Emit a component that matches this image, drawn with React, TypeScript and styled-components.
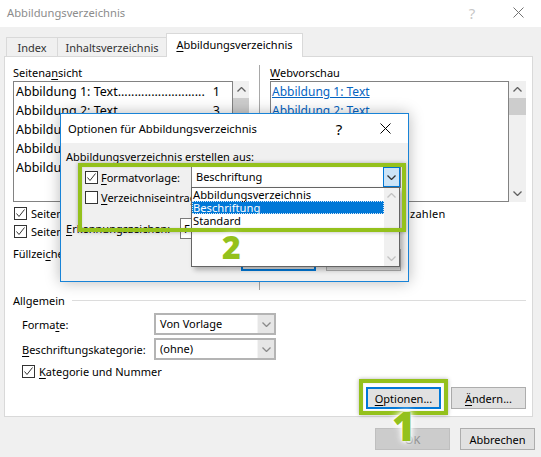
import React from 'react';
import styled, { createGlobalStyle } from 'styled-components';

const GREEN = '#94c11c';

const GlobalStyle = createGlobalStyle`
  html, body {
    margin: 0;
    padding: 0;
    background: #f0f0f0;
  }
  body {
    font-family: "Noto Sans", "Liberation Sans", sans-serif;
    font-size: 11px;
    color: #000;
  }
  * {
    box-sizing: border-box;
  }
`;

const Acc = styled.span`
  text-decoration: underline;
  text-underline-offset: 2px;
`;

const Chevron = ({ up, color = '#606060' }: { up?: boolean; color?: string }) => (
  <svg width="9" height="5" viewBox="0 0 9 5">
    <polyline
      points={up ? '0.5,4.5 4.5,0.5 8.5,4.5' : '0.5,0.5 4.5,4.5 8.5,0.5'}
      fill="none"
      stroke={color}
      strokeWidth="1.3"
    />
  </svg>
);

const CloseIcon = () => (
  <svg width="11" height="11" viewBox="0 0 11 11">
    <path d="M0.5 0.5 L10.5 10.5 M10.5 0.5 L0.5 10.5" stroke="#000" strokeWidth="1" />
  </svg>
);

const CheckMark = () => (
  <svg width="11" height="11" viewBox="0 0 11 11">
    <polyline points="1.5,5.5 4,8.5 9.5,1.5" fill="none" stroke="#333" strokeWidth="1" />
  </svg>
);

const Window = styled.div`
  position: relative;
  width: 541px;
  height: 457px;
  background: #f0f0f0;
  overflow: hidden;
`;

const TitleBar = styled.div<{ $h: number; $lift?: number }>`
  display: flex;
  align-items: center;
  height: ${(p) => p.$h}px;
  background: #fff;
  padding-left: 7px;
  padding-bottom: ${(p) => p.$lift ?? 0}px;
`;

const TitleText = styled.div<{ $active?: boolean }>`
  flex: 1;
  font-size: 11.2px;
  color: ${(p) => (p.$active ? '#000' : '#8c8c8c')};
  white-space: nowrap;
`;

const CaptionButton = styled.div<{ $dim?: boolean }>`
  width: 46px;
  height: 100%;
  display: flex;
  align-items: center;
  justify-content: center;
  font-size: 15px;
  color: ${(p) => (p.$dim ? '#9a9a9a' : '#000')};
  opacity: ${(p) => (p.$dim ? 0.55 : 1)};
`;

const TabStrip = styled.div`
  display: flex;
  align-items: flex-end;
  height: 30px;
  padding-left: 6px;
  margin-bottom: -1px;
  position: relative;
  z-index: 1;
`;

const Tab = styled.div<{ $w: number; $active?: boolean }>`
  width: ${(p) => p.$w}px;
  height: ${(p) => (p.$active ? 24 : 19)}px;
  margin-bottom: ${(p) => (p.$active ? 0 : 1)}px;
  margin-left: -1px;
  &:first-child {
    margin-left: 0;
  }
  border: 1px solid #d9d9d9;
  border-bottom: none;
  background: ${(p) => (p.$active ? '#fff' : '#f0f0f0')};
  display: flex;
  align-items: center;
  justify-content: center;
  padding-bottom: ${(p) => (p.$active ? 2 : 0)}px;
  color: ${(p) => (p.$active ? '#000' : '#333')};
  white-space: nowrap;
`;

const Panel = styled.div`
  margin: 0 8px 0 4px;
  background: #fff;
  border: 1px solid #d9d9d9;
  padding: 7px 6px 7px 8px;
`;

const TopArea = styled.div`
  display: grid;
  grid-template-columns: 236px 1px 1fr;
  column-gap: 10px;
  height: 226px;
`;

const Column = styled.div`
  display: flex;
  flex-direction: column;
`;

const VSeparator = styled.div`
  background: #a8a8a8;
  margin-top: 1px;
`;

const FieldLabel = styled.div`
  height: 17px;
  line-height: 17px;
  white-space: nowrap;
`;

const ListFrame = styled.div`
  display: flex;
  height: 121px;
`;

const ListBox = styled.div<{ $w: number; $pad: number }>`
  width: ${(p) => p.$w}px;
  border: 1px solid #828282;
  background: #fff;
  overflow: hidden;
  padding: 0 12px 0 ${(p) => p.$pad}px;
`;

const ListEntry = styled.div`
  display: flex;
  height: 19px;
  line-height: 19px;
  font-size: 12.5px;
  white-space: nowrap;
`;

const PageNumber = styled.span`
  margin-left: auto;
`;

const LinkEntry = styled.div`
  height: 18.5px;
  line-height: 19px;
  font-size: 12px;
  color: #0563c1;
  text-decoration: underline;
  white-space: nowrap;
`;

const ScrollBar = styled.div<{ $w: number }>`
  width: ${(p) => p.$w}px;
  background: #f0f0f0;
  display: flex;
  flex-direction: column;
`;

const ScrollArrow = styled.div<{ $bottom?: boolean }>`
  height: 17px;
  display: flex;
  align-items: center;
  justify-content: center;
  margin-top: ${(p) => (p.$bottom ? 'auto' : '0')};
`;

const Thumb = styled.div`
  height: 17px;
  background: #cdcdcd;
`;

const CheckRow = styled.div<{ $indent?: number; $top?: number }>`
  display: flex;
  align-items: center;
  gap: 4px;
  height: 18px;
  padding-left: ${(p) => p.$indent ?? 1}px;
  margin-top: ${(p) => p.$top ?? 0}px;
  white-space: nowrap;
`;

const CheckBox = styled.div`
  width: 13px;
  height: 13px;
  flex: none;
  border: 1px solid #333;
  background: #fff;
  display: flex;
  align-items: center;
  justify-content: center;
`;

const InlineRow = styled.div<{ $top?: number }>`
  display: flex;
  align-items: center;
  height: 22px;
  margin-top: ${(p) => p.$top ?? 0}px;
  white-space: nowrap;
`;

const GroupHeader = styled.div`
  display: flex;
  align-items: center;
  gap: 7px;
  height: 16px;
  margin-top: 2px;
`;

const GroupLine = styled.div`
  flex: 1;
  height: 1px;
  background: #dcdcdc;
`;

const FormGrid = styled.div`
  display: grid;
  grid-template-columns: 132px 122px;
  grid-auto-rows: 22px;
  row-gap: 3px;
  align-items: center;
  margin-top: 5px;
  padding-left: 9px;
  white-space: nowrap;
`;

const ComboBox = styled.div<{ $w?: number; $focus?: boolean; $gap?: number }>`
  display: flex;
  width: ${(p) => (p.$w ? `${p.$w}px` : 'auto')};
  height: 22px;
  margin-left: ${(p) => p.$gap ?? 0}px;
  border: ${(p) => (p.$focus ? '1px solid #7a7a7a' : '2px solid #b4b4b4')};
  background: #fff;
`;

const ComboText = styled.div<{ $focus?: boolean }>`
  flex: 1;
  padding-left: 4px;
  line-height: ${(p) => (p.$focus ? 20 : 18)}px;
  overflow: hidden;
  white-space: nowrap;
`;

const ComboButton = styled.div<{ $focus?: boolean }>`
  width: 17px;
  display: flex;
  align-items: center;
  justify-content: center;
  background: ${(p) => (p.$focus ? '#cce4f7' : '#e6e6e6')};
  border: ${(p) => (p.$focus ? '1px solid #0078d7' : 'none')};
  border-left: ${(p) => (p.$focus ? '1px solid #0078d7' : '1px solid #f4f4f4')};
`;

const ButtonRow = styled.div<{ $top: number; $right?: number }>`
  display: flex;
  justify-content: flex-end;
  gap: 10px;
  margin-top: ${(p) => p.$top}px;
  padding-right: ${(p) => p.$right ?? 0}px;
`;

const Button = styled.div<{ $primary?: boolean; $disabled?: boolean }>`
  width: 75px;
  height: 22px;
  display: flex;
  align-items: center;
  justify-content: center;
  background: ${(p) => (p.$disabled ? '#cccccc' : '#e1e1e1')};
  color: ${(p) => (p.$disabled ? '#8a8a8a' : '#000')};
  border: ${(p) =>
    p.$primary ? '2px solid #0078d7' : p.$disabled ? '1px solid #bfbfbf' : '1px solid #adadad'};
  white-space: nowrap;
`;

/* Options popup */

const Popup = styled.div`
  position: absolute;
  left: 60px;
  top: 113px;
  width: 349px;
  height: 169px;
  border: 1px solid #1883d7;
  background: #f0f0f0;
  box-shadow: 0 0 14px rgba(0, 0, 0, 0.28);
`;

const PopupBody = styled.div`
  padding: 6px 7px 0 5px;
`;

const PopupHeading = styled.div`
  height: 16px;
  line-height: 16px;
  white-space: nowrap;
`;

const OptionRow = styled.div<{ $h: number; $top?: number }>`
  display: flex;
  align-items: center;
  height: ${(p) => p.$h}px;
  margin-top: ${(p) => p.$top ?? 0}px;
  white-space: nowrap;
`;

const OptionLabel = styled.div<{ $w: number; $indent?: number }>`
  width: ${(p) => p.$w}px;
  padding-left: ${(p) => p.$indent ?? 0}px;
  display: flex;
  align-items: center;
  gap: 3px;
  flex: none;
`;

const SmallInput = styled.div`
  width: 70px;
  height: 21px;
  border: 1px solid #7a7a7a;
  background: #fff;
  padding-left: 3px;
  line-height: 19px;
`;

const DropList = styled.div`
  position: absolute;
  left: 130px;
  top: 73px;
  width: 209px;
  height: 80px;
  border: 1px solid #646464;
  background: #fff;
  display: flex;
  box-shadow: 3px 3px 5px rgba(0, 0, 0, 0.28);
`;

const DropItems = styled.div`
  flex: 1;
`;

const DropItem = styled.div<{ $selected?: boolean }>`
  height: 13px;
  line-height: 13px;
  padding-left: 1px;
  font-size: 11.2px;
  white-space: nowrap;
  background: ${(p) => (p.$selected ? '#0078d7' : 'transparent')};
  color: ${(p) => (p.$selected ? '#fff' : '#000')};
  outline: ${(p) => (p.$selected ? '1px dotted #d8e8f8' : 'none')};
  outline-offset: -1px;
`;

const DropScroll = styled.div`
  width: 15px;
  background: #f0f0f0;
  display: flex;
  flex-direction: column;
  justify-content: space-between;
  align-items: center;
  padding: 5px 0;
`;

/* Annotations */

const Highlight = styled.div<{ $x: number; $y: number; $w: number; $h: number }>`
  position: absolute;
  left: ${(p) => p.$x}px;
  top: ${(p) => p.$y}px;
  width: ${(p) => p.$w}px;
  height: ${(p) => p.$h}px;
  border: 4px solid ${GREEN};
  box-shadow: 0 0 4px rgba(0, 0, 0, 0.3), inset 0 0 2px rgba(0, 0, 0, 0.15);
`;

const StepNumber = styled.div<{ $x: number; $y: number; $size: number }>`
  position: absolute;
  left: ${(p) => p.$x}px;
  top: ${(p) => p.$y}px;
  font-family: "Noto Sans", "Liberation Sans", sans-serif;
  font-weight: 900;
  font-size: ${(p) => p.$size}px;
  line-height: 1;
  color: ${GREEN};
  text-shadow: 0 0 3px #fff, 0 0 6px #fff, 0 0 8px #fff;
`;

const figures = [
  { label: 'Abbildung 1: Text', page: '1' },
  { label: 'Abbildung 2: Text', page: '3' },
  { label: 'Abbildung 3: Text', page: '5' },
  { label: 'Abbildung 4: Text', page: '7' },
  { label: 'Abbildung 5: Text', page: '9' },
];

const dots = '.'.repeat(26);

export default function App() {
  return (
    <>
      <GlobalStyle />
      <Window>
        <TitleBar $h={27} $lift={2}>
          <TitleText>Abbildungsverzeichnis</TitleText>
          <CaptionButton $dim>?</CaptionButton>
          <CaptionButton $dim>
            <CloseIcon />
          </CaptionButton>
        </TitleBar>

        <TabStrip>
          <Tab $w={52}>Index</Tab>
          <Tab $w={110}>Inhaltsverzeichnis</Tab>
          <Tab $w={137} $active>
            <span>
              <Acc>A</Acc>bbildungsverzeichnis
            </span>
          </Tab>
        </TabStrip>

        <Panel>
          <TopArea>
            <Column>
              <FieldLabel>
                Seitena<Acc>n</Acc>sicht
              </FieldLabel>
              <ListFrame>
                <ListBox $w={220} $pad={2}>
                  {figures.map((f) => (
                    <ListEntry key={f.label}>
                      <span>
                        {f.label}
                        {dots}
                      </span>
                      <PageNumber>{f.page}</PageNumber>
                    </ListEntry>
                  ))}
                </ListBox>
                <ScrollBar $w={16}>
                  <ScrollArrow>
                    <Chevron up />
                  </ScrollArrow>
                  <Thumb />
                  <ScrollArrow $bottom>
                    <Chevron />
                  </ScrollArrow>
                </ScrollBar>
              </ListFrame>
              <CheckRow $top={2}>
                <CheckBox>
                  <CheckMark />
                </CheckBox>
                <span>
                  Seitenzahlen <Acc>a</Acc>nzeigen
                </span>
              </CheckRow>
              <CheckRow>
                <CheckBox>
                  <CheckMark />
                </CheckBox>
                <span>
                  Seitenzahlen <Acc>r</Acc>echtsbündig
                </span>
              </CheckRow>
              <InlineRow $top={2}>
                <span>
                  Füllzei<Acc>c</Acc>hen:
                </span>
                <ComboBox $w={90} $gap={40}>
                  <ComboText>........</ComboText>
                  <ComboButton>
                    <Chevron color="#8a8a8a" />
                  </ComboButton>
                </ComboBox>
              </InlineRow>
            </Column>

            <VSeparator />

            <Column>
              <FieldLabel>
                <Acc>W</Acc>ebvorschau
              </FieldLabel>
              <ListFrame>
                <ListBox $w={239} $pad={1}>
                  {figures.map((f) => (
                    <LinkEntry key={f.label}>{f.label}</LinkEntry>
                  ))}
                </ListBox>
                <ScrollBar $w={17}>
                  <ScrollArrow>
                    <Chevron up />
                  </ScrollArrow>
                  <Thumb />
                  <ScrollArrow $bottom>
                    <Chevron />
                  </ScrollArrow>
                </ScrollBar>
              </ListFrame>
              <CheckRow $top={2} $indent={0}>
                <CheckBox>
                  <CheckMark />
                </CheckBox>
                <span style={{ letterSpacing: '0.3px' }}>
                  <Acc>H</Acc>yperlinks statt Seitenzahlen
                </span>
              </CheckRow>
            </Column>
          </TopArea>

          <GroupHeader>
            <span>Allgemein</span>
            <GroupLine />
          </GroupHeader>

          <FormGrid>
            <span>
              Forma<Acc>t</Acc>e:
            </span>
            <ComboBox>
              <ComboText>Von Vorlage</ComboText>
              <ComboButton>
                <Chevron color="#8a8a8a" />
              </ComboButton>
            </ComboBox>
            <span>
              <Acc>B</Acc>eschriftungskategorie:
            </span>
            <ComboBox>
              <ComboText>(ohne)</ComboText>
              <ComboButton>
                <Chevron color="#8a8a8a" />
              </ComboButton>
            </ComboBox>
          </FormGrid>

          <CheckRow $indent={9} $top={2}>
            <CheckBox>
              <CheckMark />
            </CheckBox>
            <span>
              <Acc>K</Acc>ategorie und Nummer
            </span>
          </CheckRow>

          <ButtonRow $top={7}>
            <Button $primary>
              <span>
                <Acc>O</Acc>ptionen...
              </span>
            </Button>
            <Button>
              <span>
                <Acc>Ä</Acc>ndern...
              </span>
            </Button>
          </ButtonRow>
        </Panel>

        <ButtonRow $top={11} $right={6}>
          <Button $disabled>OK</Button>
          <Button>Abbrechen</Button>
        </ButtonRow>

        <Popup>
          <TitleBar $h={29}>
            <TitleText $active>Optionen für Abbildungsverzeichnis</TitleText>
            <CaptionButton>?</CaptionButton>
            <CaptionButton>
              <CloseIcon />
            </CaptionButton>
          </TitleBar>
          <PopupBody>
            <PopupHeading>Abbildungsverzeichnis erstellen aus:</PopupHeading>
            <OptionRow $h={22} $top={1}>
              <OptionLabel $w={125} $indent={19}>
                <CheckBox>
                  <CheckMark />
                </CheckBox>
                <span>
                  <Acc>F</Acc>ormatvorlage:
                </span>
              </OptionLabel>
              <ComboBox $w={210} $focus>
                <ComboText $focus>Beschriftung</ComboText>
                <ComboButton $focus>
                  <Chevron color="#333" />
                </ComboButton>
              </ComboBox>
            </OptionRow>
            <OptionRow $h={18}>
              <OptionLabel $w={125} $indent={19}>
                <CheckBox />
                <span>
                  <Acc>V</Acc>erzeichniseintragsfelder
                </span>
              </OptionLabel>
            </OptionRow>
            <OptionRow $h={21} $top={12}>
              <OptionLabel $w={114}>
                <span>
                  <Acc>E</Acc>rkennungszeichen:
                </span>
              </OptionLabel>
              <SmallInput>F</SmallInput>
            </OptionRow>
            <ButtonRow $top={10}>
              <Button $primary>OK</Button>
              <Button>Abbrechen</Button>
            </ButtonRow>
          </PopupBody>

          <DropList>
            <DropItems>
              <DropItem>Abbildungsverzeichnis</DropItem>
              <DropItem $selected>Beschriftung</DropItem>
              <DropItem>Standard</DropItem>
            </DropItems>
            <DropScroll>
              <Chevron up color="#c2c2c2" />
              <Chevron color="#c2c2c2" />
            </DropScroll>
          </DropList>
        </Popup>

        <Highlight $x={78} $y={163} $w={328} $h={69} />
        <Highlight $x={359} $y={379} $w={89} $h={36} />
        <StepNumber $x={222} $y={231} $size={32}>
          2
        </StepNumber>
        <StepNumber $x={392} $y={406} $size={40}>
          1
        </StepNumber>
      </Window>
    </>
  );
}
